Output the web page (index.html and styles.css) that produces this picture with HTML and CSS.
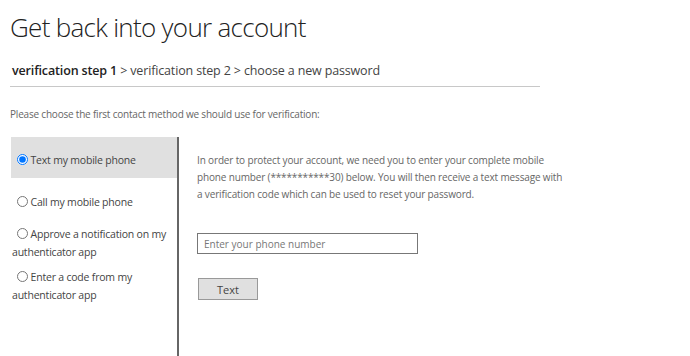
FILE: index.html
```html
<!DOCTYPE html>
<html lang="en">
<head>
  <meta charset="UTF-8">
  <meta name="viewport" content="width=device-width, initial-scale=1.0">
  <title>Get back into your account</title>
  <link rel="stylesheet" href="styles.css">
</head>
<body>
  <div class="page">
    <!-- Title -->
    <h1 class="title">Get back into your account</h1>

    <!-- Steps -->
    <div class="steps">
      <b>verification step 1</b> &gt; verification step 2 &gt; choose a new password
    </div>

    <p class="intro">Please choose the first contact method we should use for verification:</p>

    <div class="verify">
      <!-- Methods -->
      <div class="methods">
        <label class="method active">
          <input type="radio" name="method" checked> Text my mobile phone
        </label>
        <label class="method">
          <input type="radio" name="method"> Call my mobile phone
        </label>
        <label class="method">
          <input type="radio" name="method"> Approve a notification on my authenticator app
        </label>
        <label class="method">
          <input type="radio" name="method"> Enter a code from my authenticator app
        </label>
      </div>

      <!-- Detail -->
      <div class="detail">
        <p class="detail-text">
          In order to protect your account, we need you to enter your complete mobile
          phone number (***********30) below. You will then receive a text message with a
          verification code which can be used to reset your password.
        </p>
        <input type="text" class="phone-input" placeholder="Enter your phone number">
        <button class="text-button">Text</button>
      </div>
    </div>
  </div>
</body>
</html>
```

FILE: styles.css
```css
/* =====================
   Global
   ===================== */
body {
  margin: 0;
  font-family: "Open Sans", sans-serif;
  color: #333;
  background: #fff;
}

.page {
  padding: 0 10px;
}

/* =====================
   Header
   ===================== */
.title {
  margin: 0;
  padding-top: 9px;
  font-size: 26px;
  font-weight: 300;
  line-height: 36px;
  color: #222;
  letter-spacing: -0.7px;
}

.steps {
  width: 530px;
  margin-top: 17px;
  padding: 0 2px 6px;
  box-sizing: border-box;
  font-size: 12.5px;
  line-height: 18px;
  color: #444;
  letter-spacing: -0.15px;
  border-bottom: 1px solid #c8c8c8;
}

.steps b {
  font-weight: 600;
  color: #222;
}

.intro {
  margin: 20px 0 0;
  font-size: 10px;
  line-height: 14px;
  color: #666;
  letter-spacing: -0.2px;
}

/* =====================
   Verification
   ===================== */
.verify {
  display: flex;
  margin-top: 16px;
}

.methods {
  width: 166px;
  min-height: 219px;
  padding-left: 1px;
  border-right: 2px solid #666;
}

.method {
  display: block;
  padding: 0 5px 0 1px;
  font-size: 10.5px;
  line-height: 18px;
  color: #444;
  letter-spacing: -0.2px;
}

.method input {
  width: 11px;
  height: 11px;
  margin: 0 0 0 5px;
  vertical-align: -1px;
}

.method.active {
  height: 41px;
  box-sizing: border-box;
  padding-top: 14px;
  background: #e0e0e0;
}

.method:nth-child(2) {
  padding-top: 15px;
}

.method:nth-child(3) {
  padding-top: 14px;
}

.method:nth-child(4) {
  padding-top: 7px;
}

.detail {
  padding: 15px 0 0 18px;
  display: flex;
  flex-direction: column;
  align-items: flex-start;
}

.detail-text {
  width: 372px;
  margin: 0;
  font-size: 10px;
  line-height: 17px;
  color: #666;
  letter-spacing: -0.15px;
}

.phone-input {
  width: 221px;
  height: 21px;
  box-sizing: border-box;
  margin-top: 30px;
  padding: 0 6px;
  border: 1px solid #777;
  font-family: inherit;
  font-size: 10px;
  color: #333;
}

.phone-input::placeholder {
  color: #777;
}

.text-button {
  width: 60px;
  height: 22px;
  margin-top: 24px;
  margin-left: 1px;
  border: 1px solid #999;
  background: #e0e0e0;
  font-family: inherit;
  font-size: 11px;
  color: #444;
}
```
